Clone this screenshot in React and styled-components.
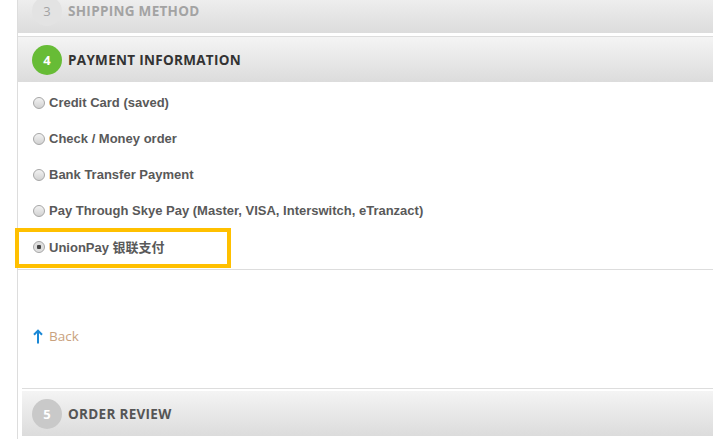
import React from 'react';
import styled, { createGlobalStyle } from 'styled-components';

const GlobalStyle = createGlobalStyle`
  html, body {
    margin: 0;
    padding: 0;
    background: #ffffff;
    overflow: hidden;
  }
`;

const methods = [
  { id: 'ccsave', label: 'Credit Card (saved)' },
  { id: 'checkmo', label: 'Check / Money order' },
  { id: 'banktransfer', label: 'Bank Transfer Payment' },
  { id: 'skyepay', label: 'Pay Through Skye Pay (Master, VISA, Interswitch, eTranzact)' },
  { id: 'unionpay', label: 'UnionPay 银联支付', highlighted: true },
];

const App = () => (
  <>
    <GlobalStyle />
    <Checkout>
      <Section>
        <StepHeader>
          <StepNumber $state="done">3</StepNumber>
          <StepTitle $state="done">Shipping Method</StepTitle>
        </StepHeader>
      </Section>

      <ActiveSection>
        <StepHeader>
          <StepNumber $state="active">4</StepNumber>
          <StepTitle $state="active">Payment Information</StepTitle>
        </StepHeader>
        <MethodList>
          {methods.map((m) => (
            <MethodRow key={m.id} $highlighted={m.highlighted}>
              <Radio type="radio" name="payment" defaultChecked={m.highlighted} />
              <MethodLabel>{m.label}</MethodLabel>
            </MethodRow>
          ))}
        </MethodList>
        <Actions>
          <BackLink href="#">
            <ArrowUp viewBox="0 0 10 15" aria-hidden="true">
              <path d="M5 14.5V2M1 5.8L5 1.6L9 5.8" fill="none" stroke="#1a88d6" strokeWidth="2" />
            </ArrowUp>
            Back
          </BackLink>
        </Actions>
      </ActiveSection>

      <UpcomingSection>
        <StepHeader $inset>
          <StepNumber $state="upcoming">5</StepNumber>
          <StepTitle $state="upcoming">Order Review</StepTitle>
        </StepHeader>
      </UpcomingSection>
    </Checkout>
  </>
);

export default App;

// Styled Components
const Checkout = styled.div`
  margin: -12px 0 0 17px;
  border-left: 1px solid #dddddd;
  min-height: 460px;
`;

const Section = styled.div``;

const ActiveSection = styled.div`
  margin-top: 3px;
  border-top: 1px solid #dddddd;
`;

const UpcomingSection = styled.div`
  margin-left: 4px;
  border-top: 1px solid #dddddd;
  padding-top: 2px;
`;

const StepHeader = styled.div`
  display: flex;
  align-items: center;
  gap: 6px;
  height: 45px;
  padding-left: ${(p) => (p.$inset ? '10px' : '14px')};
  background: linear-gradient(to bottom, #f4f4f4 0%, #dcdcdc 100%);
`;

const numberColors = {
  done: { bg: '#e3e3e3', fg: '#a3a3a3' },
  active: { bg: '#67bc36', fg: '#ffffff' },
  upcoming: { bg: '#c9c9c9', fg: '#ffffff' },
};

const titleColors = {
  done: '#a3a3a3',
  active: '#333333',
  upcoming: '#555555',
};

const StepNumber = styled.span`
  display: flex;
  align-items: center;
  justify-content: center;
  width: 30px;
  height: 30px;
  border-radius: 50%;
  background: ${(p) => numberColors[p.$state].bg};
  color: ${(p) => numberColors[p.$state].fg};
  font-family: 'Open Sans', sans-serif;
  font-size: 13px;
  font-weight: ${(p) => (p.$state === 'done' ? 400 : 700)};
`;

const StepTitle = styled.h3`
  margin: 0;
  font-family: 'Open Sans', sans-serif;
  font-size: 13.5px;
  font-weight: 700;
  text-transform: uppercase;
  letter-spacing: 0.3px;
  color: ${(p) => titleColors[p.$state]};
`;

const MethodList = styled.ul`
  list-style: none;
  margin: 0;
  padding: 2px 0 5px 15px;
  border-bottom: 1px solid #dddddd;
`;

const MethodRow = styled.li`
  position: relative;
  display: flex;
  align-items: center;
  height: 36px;

  ${(p) =>
    p.$highlighted &&
    `
    &::after {
      content: '';
      position: absolute;
      left: -18px;
      top: 0;
      width: 216px;
      height: 40px;
      box-sizing: border-box;
      border: 4px solid #ffc000;
      pointer-events: none;
    }
  `}
`;

const Radio = styled.input`
  appearance: none;
  width: 12px;
  height: 12px;
  margin: 2px 4px 0 0;
  border: 1px solid #a6a6a6;
  border-radius: 50%;
  background: linear-gradient(to bottom, #f2f2f2 0%, #d2d2d2 100%);
  box-sizing: border-box;

  &:checked {
    background: radial-gradient(circle, #444444 0 2px, #dcdcdc 2.5px, #e6e6e6 100%);
  }
`;

const MethodLabel = styled.label`
  font-family: 'Liberation Sans', Arial, 'Noto Sans CJK SC', sans-serif;
  font-size: 13px;
  font-weight: 700;
  color: #595959;
`;

const Actions = styled.div`
  display: flex;
  align-items: center;
  box-sizing: border-box;
  height: 118px;
  padding: 14px 0 0 15px;
`;

const BackLink = styled.a`
  display: flex;
  align-items: center;
  gap: 6px;
  font-family: 'Open Sans', sans-serif;
  font-size: 13.5px;
  color: #c9a27e;
  text-decoration: none;
`;

const ArrowUp = styled.svg`
  width: 10px;
  height: 15px;
`;
